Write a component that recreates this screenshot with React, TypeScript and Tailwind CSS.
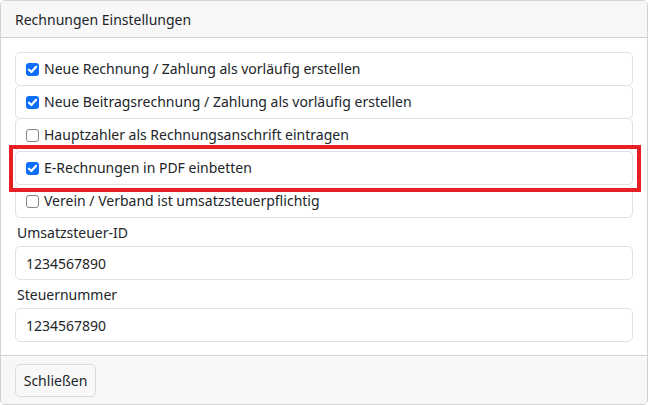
import React from 'react';

type Option = { label: string; checked: boolean };

const options: Option[] = [
  { label: 'Neue Rechnung / Zahlung als vorläufig erstellen', checked: true },
  { label: 'Neue Beitragsrechnung / Zahlung als vorläufig erstellen', checked: true },
  { label: 'Hauptzahler als Rechnungsanschrift eintragen', checked: false },
  { label: 'E-Rechnungen in PDF einbetten', checked: true },
  { label: 'Verein / Verband ist umsatzsteuerpflichtig', checked: false },
];

function Check({ checked }: { checked: boolean }) {
  if (!checked) {
    return (
      <span className="block w-[13px] h-[13px] shrink-0 rounded-[3px] border border-[#858585] bg-white" />
    );
  }
  return (
    <span className="flex items-center justify-center w-[13px] h-[13px] shrink-0 rounded-[3px] bg-[#0d6efd]">
      <svg width="11" height="11" viewBox="0 0 10 10" fill="none">
        <path d="M1.8 5.2 L4 7.3 L8.3 2.6" stroke="white" strokeWidth="2" strokeLinecap="round" strokeLinejoin="round" />
      </svg>
    </span>
  );
}

export default function App() {
  return (
    <div
      className="relative w-[649px] h-[405px] bg-white text-[#212529] text-[14px]"
      style={{ fontFamily: '"Noto Sans", "Open Sans", sans-serif' }}
    >
      <div className="w-[648px] h-[405px] flex flex-col border border-[#d3d3d3] rounded-[5px] overflow-hidden">
        <div className="h-[37px] shrink-0 flex items-center px-[14px] bg-[#f7f7f7] border-b border-[#d3d3d3]">
          Rechnungen Einstellungen
        </div>

        <div className="flex-1 flex flex-col px-[14px] pt-[14px]">
          <div className="flex flex-col">
            {options.map((o, i) => (
              <div
                key={o.label}
                className={`h-[34px] flex items-center gap-[5px] pl-[10px] rounded-[5px] border border-[#dee2e6] ${i > 0 ? '-mt-px' : ''}`}
              >
                <Check checked={o.checked} />
                <span className="leading-none">{o.label}</span>
              </div>
            ))}
          </div>

          <label className="mt-[4px] leading-[21px] px-[2px]">Umsatzsteuer-ID</label>
          <div className="mt-[3px] h-[34px] flex items-center px-[10px] rounded-[5px] border border-[#dee2e6]">
            1234567890
          </div>

          <label className="mt-[4px] leading-[21px] px-[2px]">Steuernummer</label>
          <div className="mt-[3px] h-[34px] flex items-center px-[10px] rounded-[5px] border border-[#dee2e6]">
            1234567890
          </div>
        </div>

        <div className="h-[49px] shrink-0 flex items-center px-[14px] bg-[#f7f7f7] border-t border-[#d3d3d3]">
          <button className="w-[81px] h-[33px] flex items-center justify-center rounded-[5px] border border-[#dcdcdc] bg-[#f8f8f8] text-[#212529]">
            Schließen
          </button>
        </div>
      </div>

      <div className="absolute left-[9px] top-[145px] w-[632px] h-[47px] border-4 border-[#e81e25] pointer-events-none" />
    </div>
  );
}
